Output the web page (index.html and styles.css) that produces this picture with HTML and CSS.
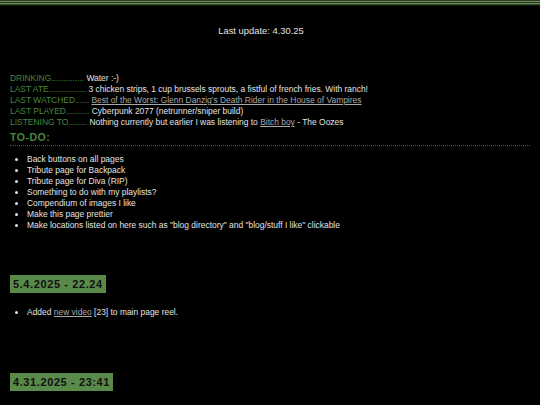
FILE: index.html
```html
<!DOCTYPE html>
<html>
<head>
<meta charset="utf-8">
<link rel="stylesheet" href="styles.css">
</head>
<body>
<div class="stripes"></div>
<main class="page">
  <p class="update">Last update: 4.30.25</p>
  <div class="status">
    <div><span class="label">DRINKING..............</span> Water :-)</div>
    <div><span class="label">LAST ATE................</span> 3 chicken strips, 1 cup brussels sprouts, a fistful of french fries. With ranch!</div>
    <div><span class="label">LAST WATCHED......</span> <a href="#">Best of the Worst: Glenn Danzig's Death Rider in the House of Vampires</a></div>
    <div><span class="label">LAST PLAYED..........</span> Cyberpunk 2077 (netrunner/sniper build)</div>
    <div><span class="label">LISTENING TO........</span> Nothing currently but earlier I was listening to <a href="#">Bitch boy</a> - The Oozes</div>
  </div>
  <h2 class="todo">TO-DO:</h2>
  <ul class="list">
    <li>Back buttons on all pages</li>
    <li>Tribute page for Backpack</li>
    <li>Tribute page for Diva (RIP)</li>
    <li>Something to do with my playlists?</li>
    <li>Compendium of images I like</li>
    <li>Make this page prettier</li>
    <li>Make locations listed on here such as "blog directory" and "blog/stuff I like" clickable</li>
  </ul>
  <h3 class="date">5.4.2025 - 22.24</h3>
  <ul class="list entry">
    <li>Added <a href="#">new video</a> [23] to main page reel.</li>
  </ul>
  <h3 class="date date2">4.31.2025 - 23:41</h3>
</main>
</body>
</html>
```
FILE: styles.css
```css
html, body {
  margin: 0;
  padding: 0;
  background: #000;
}
body {
  font-family: "Liberation Sans", Arial, sans-serif;
  color: #e2e2e2;
  font-size: 8.45px;
  line-height: 11px;
}
.stripes {
  height: 6px;
  background: linear-gradient(to bottom,
    #2c3a26 0px, #2c3a26 1px,
    #6f8f5a 1px, #6f8f5a 2px,
    #24331e 2px, #24331e 3px,
    #6f8f5a 3px, #6f8f5a 4px,
    #2f4a25 4px, #2f4a25 5px,
    #101a0c 5px, #101a0c 6px);
}
.page {
  padding: 0 10px;
}
.update {
  margin: 0;
  padding: 19px 18px 0 0;
  text-align: center;
  font-size: 9.4px;
  line-height: 12px;
}
.status {
  margin-top: 36px;
}
.label {
  color: #4a863c;
}
a {
  color: #a8a8a8;
  text-decoration: underline;
}
.todo {
  margin: 3px 0 0;
  padding-bottom: 1px;
  color: #4a863c;
  font-size: 10.5px;
  line-height: 13px;
  font-weight: bold;
  letter-spacing: 0.5px;
  border-bottom: 1px dotted #555;
}
.list {
  margin: 8px 0 0;
  padding-left: 17px;
}
.list li {
  line-height: 11px;
}
.date {
  display: inline-block;
  margin: 44px 0 0;
  padding: 3px 3px 2px;
  background: #5a8a4a;
  color: #111;
  font-size: 11px;
  line-height: 13px;
  font-weight: bold;
  letter-spacing: 0.6px;
}
.entry {
  margin-top: 14px;
}
.date2 {
  margin-top: 55px;
}
```
